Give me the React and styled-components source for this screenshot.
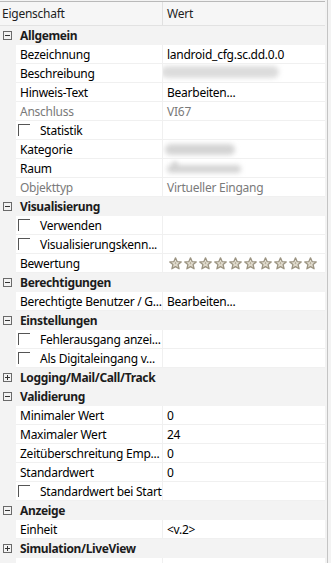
import React from "react";
import styled, { createGlobalStyle } from "styled-components";

const Global = createGlobalStyle`
  html, body { margin: 0; padding: 0; background: #f3f3f3; }
  body { font-family: "Segoe UI", "Noto Sans", sans-serif; font-size: 12px; letter-spacing: -0.25px; color: #000; }
`;

const Frame = styled.div`
  width: 328px;
  height: 563px;
  overflow: hidden;
  background: #f3f3f3;
  border-right: 1px solid #c4c4c4;
  padding-top: 1px;
  box-sizing: border-box;
`;

const Grid = styled.div`
  width: 325px;
  display: flex;
  flex-direction: column;
`;

const Header = styled.div`
  display: grid;
  grid-template-columns: 162px 1fr;
  height: 23px;
  background: #f6f6f6;
  border-top: 1px solid #b9b9b9;
  border-bottom: 1px solid #e2e2e2;
`;

const HeaderCell = styled.div`
  display: flex;
  align-items: center;
  padding-left: ${(p) => (p.$first ? "2px" : "4px")};
  border-left: ${(p) => (p.$first ? "none" : "1px solid #e0e0e0")};
  color: #1e1e1e;
  white-space: nowrap;
`;

const Row = styled.div`
  display: grid;
  grid-template-columns: 16px 146px 1fr;
  height: 19px;
  background: #f3f3f3;
`;

const Gutter = styled.div`
  display: flex;
  align-items: center;
  padding-left: 3px;
`;

const CatLabel = styled.div`
  grid-column: 2 / 4;
  display: flex;
  align-items: center;
  padding-left: 4px;
  white-space: nowrap;
  color: #1c1c1c;
  font-weight: 700;
  letter-spacing: -0.35px;
`;

const NameCell = styled.div`
  display: flex;
  align-items: center;
  background: #ffffff;
  border-bottom: 1px solid #f0f0f0;
  padding-left: ${(p) => (p.$check ? "2px" : "4px")};
  overflow: hidden;
  white-space: nowrap;
  color: ${(p) => (p.$disabled ? "#7a7a7a" : "#000")};
`;

const ValueCell = styled.div`
  display: flex;
  align-items: center;
  background: #ffffff;
  border-bottom: 1px solid #f0f0f0;
  border-left: 1px solid #f0f0f0;
  padding-left: 4px;
  overflow: hidden;
  white-space: nowrap;
  position: relative;
  color: ${(p) => (p.$disabled ? "#7a7a7a" : "#000")};
`;

const Check = styled.span`
  width: 12px;
  height: 12px;
  box-sizing: border-box;
  border-top: 1px solid #555;
  border-left: 1px solid #555;
  margin-right: 10px;
  flex-shrink: 0;
`;

const ToggleBox = styled.span`
  width: 9px;
  height: 9px;
  border: 1px solid #6a6a6a;
  box-sizing: border-box;
  position: relative;
  display: inline-block;
  &::before {
    content: "";
    position: absolute;
    left: 1px;
    right: 1px;
    top: 3px;
    height: 1px;
    background: #333;
  }
  &::after {
    content: "";
    display: ${(p) => (p.$closed ? "block" : "none")};
    position: absolute;
    top: 1px;
    bottom: 1px;
    left: 3px;
    width: 1px;
    background: #333;
  }
`;

const Blur = styled.span`
  position: absolute;
  left: ${(p) => p.$x}px;
  top: ${(p) => p.$y}px;
  width: ${(p) => p.$w}px;
  height: ${(p) => p.$h}px;
  border-radius: 8px;
  background: ${(p) => p.$c || "#dcdcdc"};
  filter: blur(2.5px);
`;

const Stars = styled.div`
  display: flex;
  gap: 2px;
  margin-left: 2px;
`;

const Star = () => (
  <svg width="13" height="13" viewBox="0 0 13 13">
    <defs>
      <linearGradient id="sg" x1="0" y1="0" x2="0" y2="1">
        <stop offset="0" stopColor="#f2efe6" />
        <stop offset="1" stopColor="#d6d0bf" />
      </linearGradient>
    </defs>
    <path
      d="M6.5 0.8 L8.1 4.6 L12.2 4.9 L9.1 7.6 L10.1 11.8 L6.5 9.6 L2.9 11.8 L3.9 7.6 L0.8 4.9 L4.9 4.6 Z"
      fill="url(#sg)"
      stroke="#9c9482"
      strokeWidth="1.3"
      strokeLinejoin="round"
    />
    <path d="M6.5 4.6 L7.5 6.2 L6.5 7.6 L5.5 6.2 Z" fill="#b8b09c" />
  </svg>
);

const rows = [
  { cat: "Allgemein" },
  { label: "Bezeichnung", value: "landroid_cfg.sc.dd.0.0" },
  { label: "Beschreibung", blur: [{ x: -2, y: 2, w: 118, h: 12 }] },
  { label: "Hinweis-Text", value: "Bearbeiten..." },
  { label: "Anschluss", value: "VI67", disabled: true },
  { label: "Statistik", check: true },
  { label: "Kategorie", blur: [{ x: 2, y: 4, w: 70, h: 11, c: "#d4d4d4" }] },
  {
    label: "Raum",
    blur: [
      { x: 4, y: 6, w: 74, h: 8, c: "#d4d4d4" },
      { x: 10, y: 3, w: 4, h: 4, c: "#a8a8a8" },
    ],
  },
  { label: "Objekttyp", value: "Virtueller Eingang", disabled: true },
  { cat: "Visualisierung" },
  { label: "Verwenden", check: true },
  { label: "Visualisierungskenn...", check: true },
  { label: "Bewertung", stars: true },
  { cat: "Berechtigungen" },
  { label: "Berechtigte Benutzer / G...", value: "Bearbeiten..." },
  { cat: "Einstellungen" },
  { label: "Fehlerausgang anzei...", check: true },
  { label: "Als Digitaleingang v...", check: true },
  { cat: "Logging/Mail/Call/Track", closed: true },
  { cat: "Validierung" },
  { label: "Minimaler Wert", value: "0" },
  { label: "Maximaler Wert", value: "24" },
  { label: "Zeitüberschreitung Emp...", value: "0" },
  { label: "Standardwert", value: "0" },
  { label: "Standardwert bei Start", check: true },
  { cat: "Anzeige" },
  { label: "Einheit", value: "<v.2>" },
  { cat: "Simulation/LiveView", closed: true },
  { label: "", value: "" },
];

export default function App() {
  return (
    <>
      <Global />
      <Frame>
        <Grid>
          <Header>
            <HeaderCell $first>Eigenschaft</HeaderCell>
            <HeaderCell>Wert</HeaderCell>
          </Header>
          {rows.map((r, i) =>
            r.cat ? (
              <Row key={i}>
                <Gutter>
                  <ToggleBox $closed={r.closed} />
                </Gutter>
                <CatLabel>{r.cat}</CatLabel>
              </Row>
            ) : (
              <Row key={i}>
                <Gutter />
                <NameCell $check={r.check} $disabled={r.disabled}>
                  {r.check && <Check />}
                  {r.label}
                </NameCell>
                <ValueCell $disabled={r.disabled}>
                  {r.value}
                  {r.blur &&
                    r.blur.map((b, j) => (
                      <Blur key={j} $x={b.x} $y={b.y} $w={b.w} $h={b.h} $c={b.c} />
                    ))}
                  {r.stars && (
                    <Stars>
                      {Array.from({ length: 10 }).map((_, k) => (
                        <Star key={k} />
                      ))}
                    </Stars>
                  )}
                </ValueCell>
              </Row>
            )
          )}
        </Grid>
      </Frame>
    </>
  );
}
